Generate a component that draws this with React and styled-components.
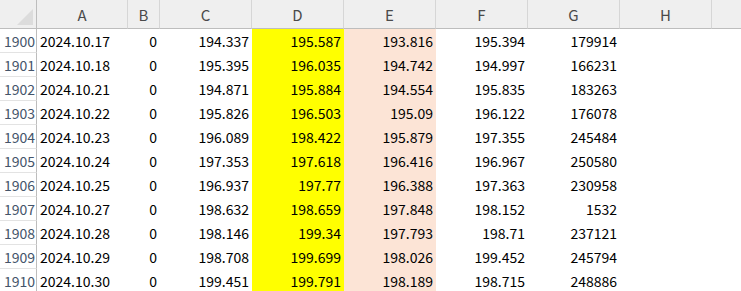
import { Fragment } from "react"
import styled, { createGlobalStyle } from "styled-components"

const GlobalStyle = createGlobalStyle`
  html, body {
    margin: 0;
    padding: 0;
    background: #ffffff;
    overflow: hidden;
  }
`

const columns = ["A", "B", "C", "D", "E", "F", "G", "H", ""]

const fills = { D: "#ffff00", E: "#fce4d6" }

const rows = [
  [1900, "2024.10.17", 0, "194.337", "195.587", "193.816", "195.394", "179914"],
  [1901, "2024.10.18", 0, "195.395", "196.035", "194.742", "194.997", "166231"],
  [1902, "2024.10.21", 0, "194.871", "195.884", "194.554", "195.835", "183263"],
  [1903, "2024.10.22", 0, "195.826", "196.503", "195.09", "196.122", "176078"],
  [1904, "2024.10.23", 0, "196.089", "198.422", "195.879", "197.355", "245484"],
  [1905, "2024.10.24", 0, "197.353", "197.618", "196.416", "196.967", "250580"],
  [1906, "2024.10.25", 0, "196.937", "197.77", "196.388", "197.363", "230958"],
  [1907, "2024.10.27", 0, "198.632", "198.659", "197.848", "198.152", "1532"],
  [1908, "2024.10.28", 0, "198.146", "199.34", "197.793", "198.71", "237121"],
  [1909, "2024.10.29", 0, "198.708", "199.699", "198.026", "199.452", "245794"],
  [1910, "2024.10.30", 0, "199.451", "199.791", "198.189", "198.715", "248886"],
]

const Sheet = styled.div`
  display: grid;
  grid-template-columns: 37px 91px 32px 92px 92px 92px 92px 92px 92px 1fr;
  grid-auto-rows: 24px;
  grid-template-rows: 29px;
  width: 741px;
  font-family: "Noto Sans CJK JP", "Liberation Sans", sans-serif;
  font-size: 14px;
  color: #000000;
`

const Corner = styled.div`
  position: relative;
  background: #efefef;
  border-right: 1px solid #bdbdbd;
  border-bottom: 1px solid #bdbdbd;

  &::after {
    content: "";
    position: absolute;
    right: 3px;
    bottom: 3px;
    width: 0;
    height: 0;
    border-left: 16px solid transparent;
    border-bottom: 16px solid #dcdcdc;
  }
`

const ColHead = styled.div`
  display: flex;
  align-items: center;
  justify-content: center;
  background: #efefef;
  border-right: ${(p) => (p.$last ? "none" : "1px solid #d6d6d6")};
  border-bottom: 1px solid #bdbdbd;
  color: #4a4a4a;
  font-size: 15px;
  padding-top: 1px;
`

const RowHead = styled.div`
  display: flex;
  align-items: center;
  justify-content: flex-end;
  padding-right: 1px;
  background: #ffffff;
  border-right: 1px solid #bdbdbd;
  border-bottom: 1px solid #e3e3e3;
  color: #44546a;
`

const Cell = styled.div`
  display: flex;
  align-items: center;
  justify-content: ${(p) => (p.$left ? "flex-start" : "flex-end")};
  padding: 0 3px;
  background: ${(p) => p.$fill || "#ffffff"};
  white-space: nowrap;
  overflow: hidden;
`

export default function App() {
  return (
    <>
      <GlobalStyle />
      <Sheet>
        <Corner />
        {columns.map((c, i) => (
          <ColHead key={i} $last={i === columns.length - 1}>
            {c}
          </ColHead>
        ))}
        {rows.map((r) => (
          <Fragment key={r[0]}>
            <RowHead>{r[0]}</RowHead>
            {r.slice(1).map((v, i) => (
              <Cell key={i} $left={i === 0} $fill={fills[columns[i]]}>
                {v}
              </Cell>
            ))}
            <Cell />
            <Cell />
          </Fragment>
        ))}
      </Sheet>
    </>
  )
}
